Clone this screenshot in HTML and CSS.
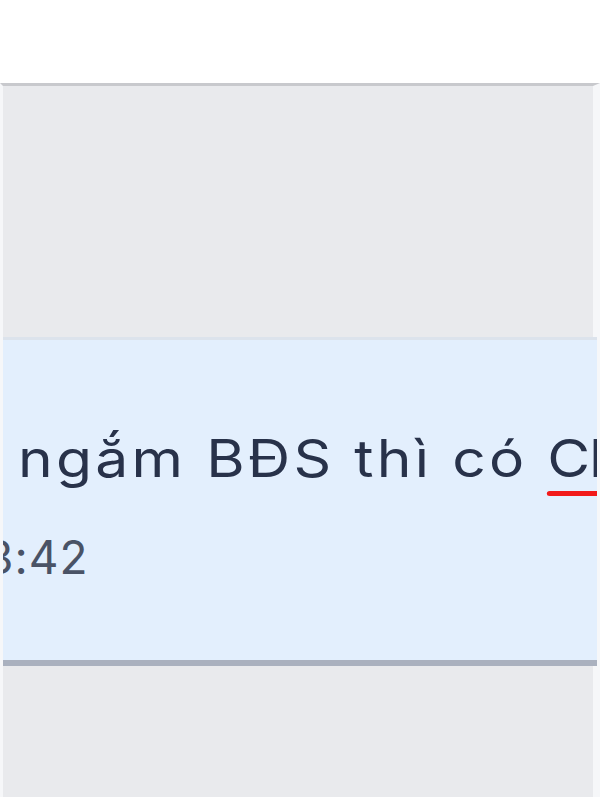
FILE: index.html
```html
<!DOCTYPE html>
<html lang="vi">
<head>
<meta charset="utf-8">
<link rel="stylesheet" href="styles.css">
</head>
<body>
  <div class="header"></div>
  <div class="pane">
    <div class="gap gap-top"></div>
    <div class="msg">
      <p class="text">ngắm BĐS thì có <span class="err">CBD</span></p>
      <div class="time">3:42</div>
    </div>
    <div class="gap gap-bottom"></div>
  </div>
</body>
</html>
```
FILE: styles.css
```css
html, body {
  margin: 0;
  padding: 0;
  width: 600px;
  height: 800px;
  overflow: hidden;
  background: #ffffff;
}
.header {
  height: 83px;
  background: #ffffff;
}
.pane {
  border-top: 3px solid #c8c9cd;
  border-left: 3px solid #f6f7f9;
  border-right: 7px solid #f6f7f9;
  background: #e9eaed;
  height: 714px;
  box-sizing: border-box;
}
.gap-top {
  height: 251px;
}
.msg {
  background: #e3effd;
  border-top: 3px solid #dce3ec;
  border-bottom: 6px solid #aab1bf;
  height: 329px;
  box-sizing: border-box;
  padding-left: 15px;
  margin-right: -4px;
  overflow: hidden;
  font-family: Inter, "Liberation Sans", sans-serif;
  white-space: nowrap;
}
.text {
  margin: 0;
  padding-top: 88px;
  font-size: 52px;
  line-height: 62px;
  letter-spacing: 2.9px;
  color: #28324a;
  transform: scaleX(1.13);
  transform-origin: 0 0;
}
.err {
  position: relative;
  letter-spacing: -1.5px;
}
.err::after {
  content: "";
  position: absolute;
  left: 0;
  right: 0;
  bottom: -6px;
  height: 5px;
  border-radius: 3px;
  background: #f21a1a;
}
.time {
  margin-top: 39px;
  margin-left: -33px;
  font-size: 46px;
  line-height: 56px;
  letter-spacing: 1px;
  color: #4a5366;
}
```
